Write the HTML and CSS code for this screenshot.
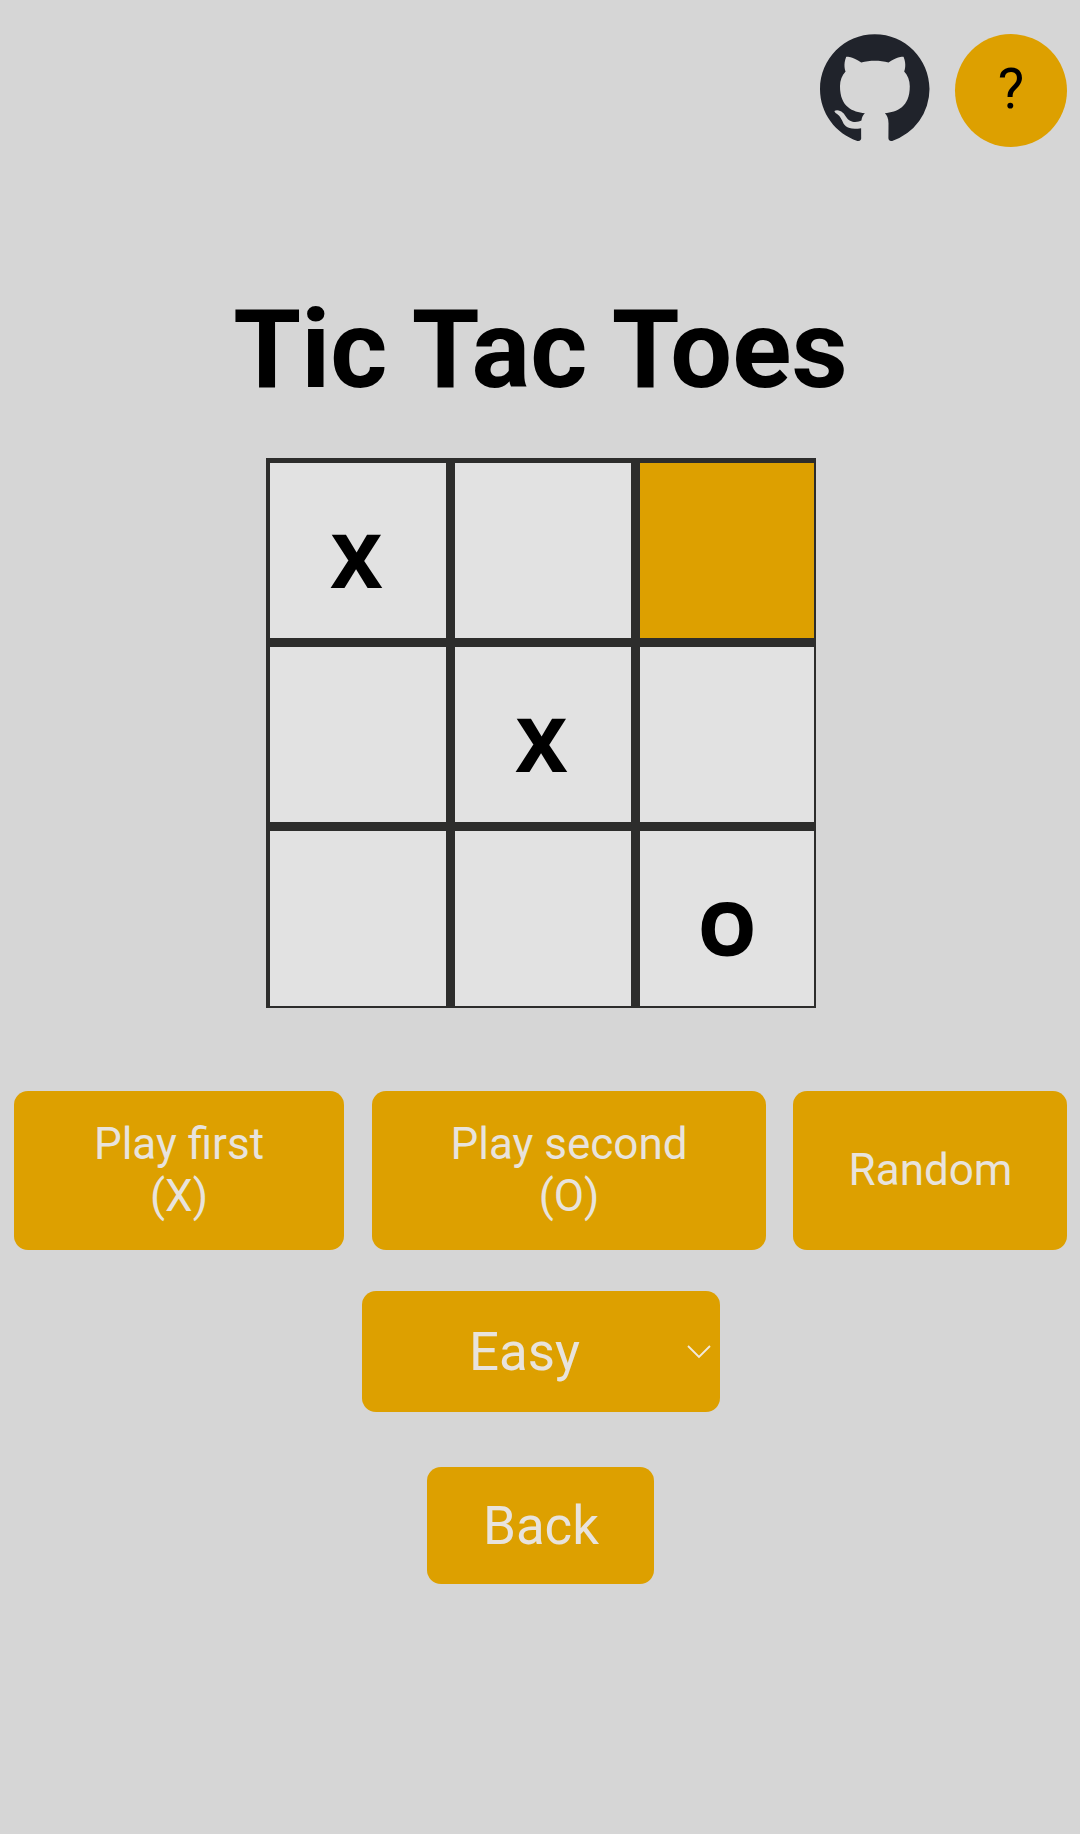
FILE: index.html
```
<!DOCTYPE html>
<html lang="en">
<head>
<meta charset="utf-8">
<title>Tic Tac Toes</title>
<link rel="stylesheet" href="styles.css">
</head>
<body>
<header class="toolbar">
  <a class="github" href="#" aria-label="GitHub">
    <svg viewBox="0 0 16 16"><path d="M8 0C3.58 0 0 3.58 0 8c0 3.54 2.29 6.53 5.47 7.59.4.07.55-.17.55-.38 0-.19-.01-.82-.01-1.49-2.01.37-2.53-.49-2.69-.94-.09-.23-.48-.94-.82-1.13-.28-.15-.68-.52-.01-.53.63-.01 1.08.58 1.23.82.72 1.21 1.87.87 2.33.66.07-.52.28-.87.51-1.07-1.78-.2-3.64-.89-3.64-3.95 0-.87.31-1.59.82-2.15-.08-.2-.36-1.02.08-2.12 0 0 .67-.21 2.2.82.64-.18 1.32-.27 2-.27s1.36.09 2 .27c1.53-1.04 2.2-.82 2.2-.82.44 1.1.16 1.92.08 2.12.51.56.82 1.27.82 2.15 0 3.07-1.87 3.75-3.65 3.95.29.25.54.73.54 1.48 0 1.07-.01 1.93-.01 2.2 0 .21.15.46.55.38A8.01 8.01 0 0 0 16 8c0-4.42-3.58-8-8-8z"/></svg>
  </a>
  <button class="help">?</button>
</header>
<main class="game">
  <h1 class="title">Tic Tac Toes</h1>
  <div class="board">
    <div class="cell cross">X</div><div class="cell"></div><div class="cell active"></div>
    <div class="cell"></div><div class="cell cross">X</div><div class="cell"></div>
    <div class="cell"></div><div class="cell"></div><div class="cell">O</div>
  </div>
  <div class="modes">
    <button class="btn first">Play first<br>(X)</button>
    <button class="btn second">Play second<br>(O)</button>
    <button class="btn random">Random</button>
  </div>
  <button class="btn level"><span>Easy</span>
    <svg class="chevron" viewBox="0 0 24 14"><path d="M1 1l11 11L23 1"/></svg>
  </button>
  <button class="btn back">Back</button>
</main>
</body>
</html>
```
FILE: styles.css
```
* { box-sizing: border-box; }
body {
  margin: 0;
  min-height: 1834px;
  background: #d6d6d6;
  color: #000;
  font-family: Roboto, sans-serif;
}
button {
  margin: 0;
  padding: 0;
  border: 0;
  font-family: inherit;
}
.toolbar {
  display: flex;
  justify-content: flex-end;
  gap: 25px;
  padding: 34px 13px 0 0;
}
.github { width: 110px; height: 113px; }
.github svg { display: block; width: 109.5px; height: 110px; fill: #20232b; }
.help {
  width: 112px;
  height: 113px;
  padding-bottom: 3px;
  border-radius: 50%;
  background: #dda000;
  color: #000;
  font-size: 56px;
}
.game {
  display: flex;
  flex-direction: column;
  align-items: center;
}
.title {
  margin: 138px 0 44px;
  padding-left: 1px;
  font-size: 109.6px;
  line-height: 129px;
  font-weight: 700;
  white-space: nowrap;
}
.board {
  display: grid;
  grid-template-columns: 176px 176px 174px;
  grid-template-rows: 174.5px 174.5px 174.5px;
  justify-content: space-between;
  row-gap: 9.5px;
  width: 550px;
  height: 550px;
  margin-left: 2px;
  padding: 5px 2px 2px 4px;
  background: #2d2d2c;
}
.cell {
  display: flex;
  align-items: center;
  justify-content: center;
  padding-top: 17px;
  background: #e2e2e2;
  font-family: "Open Sans", sans-serif;
  font-size: 72.5px;
  font-weight: 700;
  line-height: 100px;
  -webkit-text-stroke: 1.8px #000;
}
.cross { padding-right: 3px; }
.active { background: #dda000; }
.btn {
  border-radius: 14px;
  background: #dda000;
  color: #e8e3dc;
}
.modes {
  display: flex;
  gap: 28px;
  width: 1053px;
  margin-top: 83px;
}
.modes .btn {
  height: 159px;
  padding: 0 0 2px 1px;
  font-size: 44px;
  line-height: 52px;
}
.modes .first { width: 330px; }
.modes .second { width: 394px; }
.modes .random { width: 274px; margin-left: -1px; padding-left: 2px; }
.level {
  display: grid;
  grid-template-columns: 1fr 24px;
  align-items: center;
  width: 358px;
  height: 121px;
  margin: 41px 0 0 2px;
  padding: 0 9px 0 0;
  font-size: 52.8px;
}
.chevron {
  width: 24px;
  height: 14px;
  fill: none;
  stroke: #f2eadc;
  stroke-width: 1.8;
}
.back {
  width: 227px;
  height: 117px;
  margin: 55px 0 0 1px;
  padding-left: 1px;
  font-size: 52.8px;
}
```
